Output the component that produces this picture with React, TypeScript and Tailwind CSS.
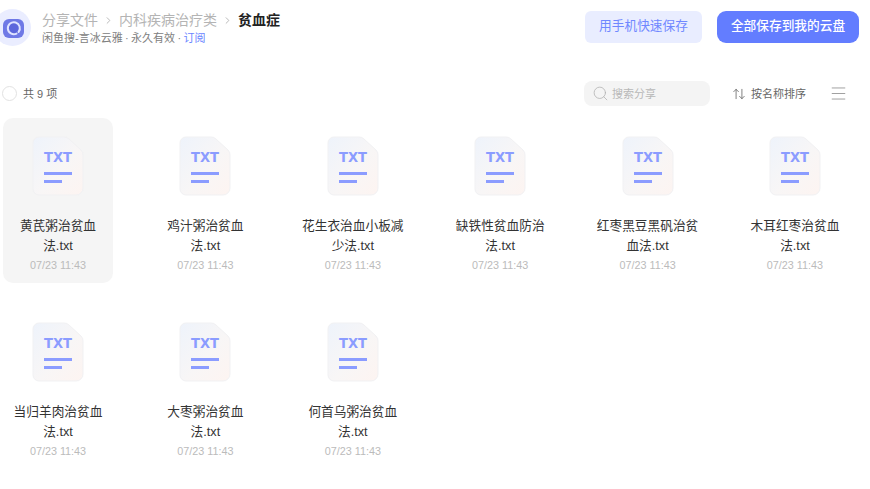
import React from "react"
import { ChevronRight, Search, ArrowUpDown, Menu } from "lucide-react"

const files = [
  { name: "黄芪粥治贫血法.txt", active: true },
  { name: "鸡汁粥治贫血法.txt" },
  { name: "花生衣治血小板减少法.txt" },
  { name: "缺铁性贫血防治法.txt" },
  { name: "红枣黑豆黑矾治贫血法.txt" },
  { name: "木耳红枣治贫血法.txt" },
  { name: "当归羊肉治贫血法.txt" },
  { name: "大枣粥治贫血法.txt" },
  { name: "何首乌粥治贫血法.txt" },
]

const TxtIcon: React.FC<{ id: number }> = ({ id }) => (
  <svg width="52" height="60" viewBox="0 0 52 60" className="block">
    <defs>
      <linearGradient id={`paper${id}`} x1="0" y1="0" x2="1" y2="1">
        <stop offset="0" stopColor="#eef3fb" />
        <stop offset="0.55" stopColor="#f8f6f6" />
        <stop offset="1" stopColor="#fdf4f1" />
      </linearGradient>
    </defs>
    <path
      d="M7 1H32Q35 1 37 3L49 14Q51 16 51 19V52a7 7 0 0 1-7 7H7a6 6 0 0 1-6-6V7a6 6 0 0 1 6-6Z"
      fill={`url(#paper${id})`}
      stroke="#f1f1f3"
    />
    <text
      x="12"
      y="26"
      textLength="28"
      lengthAdjust="spacingAndGlyphs"
      fontFamily="'DejaVu Sans', sans-serif"
      fontWeight="700"
      fontSize="14"
      fill="#8b9cff"
    >
      TXT
    </text>
    <rect x="12" y="36" width="28" height="3" fill="#8b9cff" />
    <rect x="12" y="44" width="18" height="3" fill="#8b9cff" />
  </svg>
)

const Logo = () => (
  <svg width="37" height="37" viewBox="0 0 37 37" className="block shrink-0">
    <circle cx="18.5" cy="18.5" r="18.5" fill="#eaedff" />
    <rect x="9" y="10" width="21" height="19" rx="6" fill="#6f79e6" />
    <path d="M24.5 23a6 6 0 1 0-2 1.6" fill="#5c66dc" stroke="#dfe3ff" strokeWidth="2" strokeLinecap="round" />
  </svg>
)

const App: React.FC = () => {
  return (
    <div className="w-[870px] h-[489px] overflow-hidden bg-white font-['Liberation_Sans','Noto_Sans_CJK_SC',sans-serif]">
      {/* 顶部 */}
      <div className="flex items-start justify-between h-[81px] pr-[11px]">
        <div className="flex items-start -ml-[6px]">
          <div className="mt-[9px]">
            <Logo />
          </div>
          <div className="ml-[11px] mt-[11px]">
            <div className="flex items-center h-[18px] text-sm leading-[18px] text-[#b4b4b4]">
              <span>分享文件</span>
              <ChevronRight size={11} className="mx-[5px] text-[#b4b4b4]" />
              <span>内科疾病治疗类</span>
              <ChevronRight size={11} className="mx-[5px] text-[#b4b4b4]" />
              <span className="font-bold text-[#222]">贫血症</span>
            </div>
            <div className="mt-[1px] text-[11px] leading-[16px] text-[#808080] whitespace-nowrap [word-spacing:-0.7px]">
              闲鱼搜-言冰云雅 · 永久有效 · <span className="text-[#6a85ff]">订阅</span>
            </div>
          </div>
        </div>
        <div className="flex items-center gap-[15px] mt-[11px]">
          <button className="w-[117px] h-[32px] rounded-[6px] bg-[#e9edff] text-[12.7px] text-[#7088ff]">
            用手机快速保存
          </button>
          <button className="w-[142px] h-[32px] rounded-[9px] bg-[#637dff] text-[12.7px] font-medium text-white">
            全部保存到我的云盘
          </button>
        </div>
      </div>

      {/* 工具栏 */}
      <div className="flex items-center justify-between h-[25px] pl-[2px] pr-[22px]">
        <div className="flex items-center">
          <span className="w-[15px] h-[15px] rounded-full border border-[#e2e2e2]" />
          <span className="ml-[6px] mt-[2px] text-[11px] text-[#666]">共 9 项</span>
        </div>
        <div className="flex items-center">
          <div className="flex items-center w-[126px] h-[25px] rounded-[8px] bg-[#f4f4f4] pl-[8px]">
            <Search size={17} strokeWidth={1.1} className="text-[#b0b0b0]" />
            <span className="ml-[3px] mt-[2px] text-[11px] text-[#b8b8b8]">搜索分享</span>
          </div>
          <ArrowUpDown size={14} strokeWidth={1.4} className="ml-[22px] text-[#666]" />
          <span className="ml-[5px] mt-[2px] text-[11px] text-[#666]">按名称排序</span>
          <Menu size={19} strokeWidth={1} className="ml-[23px] text-[#888]" />
        </div>
      </div>

      {/* 文件列表 */}
      <div className="grid grid-cols-[repeat(6,110px)] justify-between gap-y-[21px] w-[850px] ml-[3px] mt-[12px] pr-[3px]">
        {files.map((f, i) => (
          <div
            key={f.name}
            className={`flex flex-col items-center h-[165px] rounded-[10px] pt-[18px] ${f.active ? "bg-[#f5f5f5]" : ""}`}
          >
            <TxtIcon id={i} />
            <div className="mt-[20px] w-[104px] text-center text-[12.7px] leading-[20px] text-[#333]">
              {f.name}
            </div>
            <div className="mt-[2px] text-[10.8px] leading-[14px] text-[#bbb]">07/23 11:43</div>
          </div>
        ))}
      </div>
    </div>
  )
}

export default App
